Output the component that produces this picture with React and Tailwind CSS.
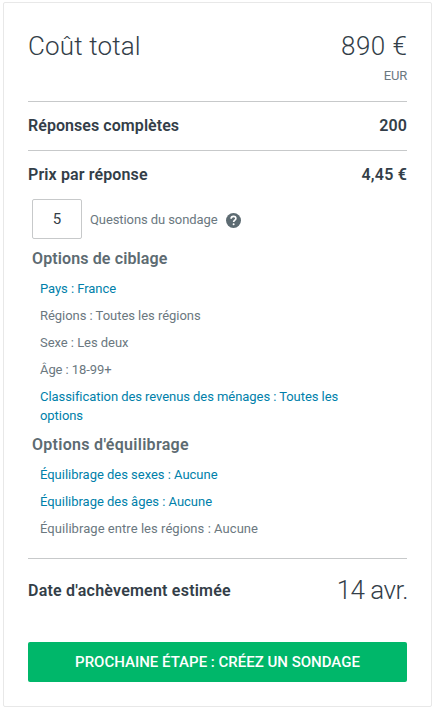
import React from "react";

const targeting = [
  { label: "Pays : France", link: true, className: "tracking-[-0.05px]" },
  { label: "Régions : Toutes les régions", className: "tracking-[-0.04px]" },
  { label: "Sexe : Les deux", className: "tracking-[-0.04px]" },
  { label: "Âge : 18-99+", className: "tracking-[-0.08px]" },
  {
    label: "Classification des revenus des ménages : Toutes les options",
    link: true,
    className: "tracking-[-0.06px]",
  },
];

const balancing = [
  { label: "Équilibrage des sexes : Aucune", link: true, className: "tracking-[-0.02px]" },
  { label: "Équilibrage des âges : Aucune", link: true, className: "tracking-[-0.02px]" },
  { label: "Équilibrage entre les régions : Aucune", className: "tracking-[0.05px]" },
];

const OptionList = ({ items }) => (
  <ul className="pl-2 pr-12 text-[13px] leading-[19px]">
    {items.map((item) => (
      <li
        key={item.label}
        className={`py-1 ${item.link ? "text-[#007faa]" : "text-[#6b787f]"} ${item.className}`}
      >
        {item.label}
      </li>
    ))}
  </ul>
);

const HelpIcon = () => (
  <svg className="ml-[9px] size-[15px]" viewBox="0 0 15 15" fill="none">
    <circle cx="7.5" cy="7.5" r="7.5" fill="#5d6b72" />
    <path
      d="M5.1 5.8C5.1 4.3 6.1 3.4 7.5 3.4S9.9 4.3 9.9 5.5C9.9 7.1 7.6 7.2 7.6 9"
      stroke="#fff"
      strokeWidth="1.6"
    />
    <circle cx="7.6" cy="11.2" r="1" fill="#fff" />
  </svg>
);

export default function App() {
  return (
    <div className="h-[710px] w-[435px] bg-white pl-[3px] pt-[2px] font-['Roboto','Noto_Sans',sans-serif] text-[#333e48]">
      <div className="flex h-[705px] w-[429px] flex-col rounded-[2px] border border-[#e8e8e8] px-6">
        {/* Total */}
        <div className="flex h-[99px] shrink-0 justify-between border-b border-[#c7c9ca] pt-[27px] font-light">
          <h1 className="text-[26px] leading-8 tracking-[0.15px]">Coût total</h1>
          <div className="text-right">
            <div className="-mr-[0.5px] text-[26px] leading-8 tracking-[0.5px]">890 €</div>
            <div className="mt-1 text-[13px] font-normal leading-5 tracking-[-0.2px] text-[#6b787f]">
              EUR
            </div>
          </div>
        </div>

        <div className="flex h-[49px] shrink-0 items-center justify-between border-b border-[#c7c9ca] text-base font-semibold">
          <span className="tracking-[0.06px]">Réponses complètes</span>
          <span className="tracking-[0.1px]">200</span>
        </div>

        <div className="flex h-12 shrink-0 items-center justify-between text-base font-semibold">
          <span className="tracking-[0.13px]">Prix par réponse</span>
          <span className="tracking-[0.2px]">4,45 €</span>
        </div>

        <div className="h-[360px] shrink-0 border-b border-[#c7c9ca] pl-1">
          <div className="flex items-center">
            <div className="flex h-10 w-[50px] items-center justify-center rounded-[2px] border border-[#c7c9ca] text-[15px]">
              5
            </div>
            <span className="ml-2 pt-[2px] text-[13px] tracking-[-0.09px] text-[#6b787f]">
              Questions du sondage
            </span>
            <div className="pt-[3px]">
              <HelpIcon />
            </div>
          </div>
          <h2 className="mt-2 h-7 text-base font-semibold leading-6 tracking-[0.12px] text-[#5d6b72]">
            Options de ciblage
          </h2>
          <OptionList items={targeting} />
          <h2 className="mt-1 h-7 text-base font-semibold leading-6 tracking-[0.29px] text-[#5d6b72]">
            Options d'équilibrage
          </h2>
          <OptionList items={balancing} />
        </div>

        <div className="flex h-[63px] shrink-0 items-center justify-between">
          <span className="text-base font-semibold tracking-[0.22px]">
            Date d'achèvement estimée
          </span>
          <span className="-mr-px text-[26px] font-light tracking-[-0.5px]">14 avr.</span>
        </div>

        <button className="mt-5 h-10 shrink-0 rounded-[2px] bg-[#00b76a] text-[15px] font-medium text-white">
          PROCHAINE ÉTAPE : CRÉEZ UN SONDAGE
        </button>
      </div>
    </div>
  );
}
